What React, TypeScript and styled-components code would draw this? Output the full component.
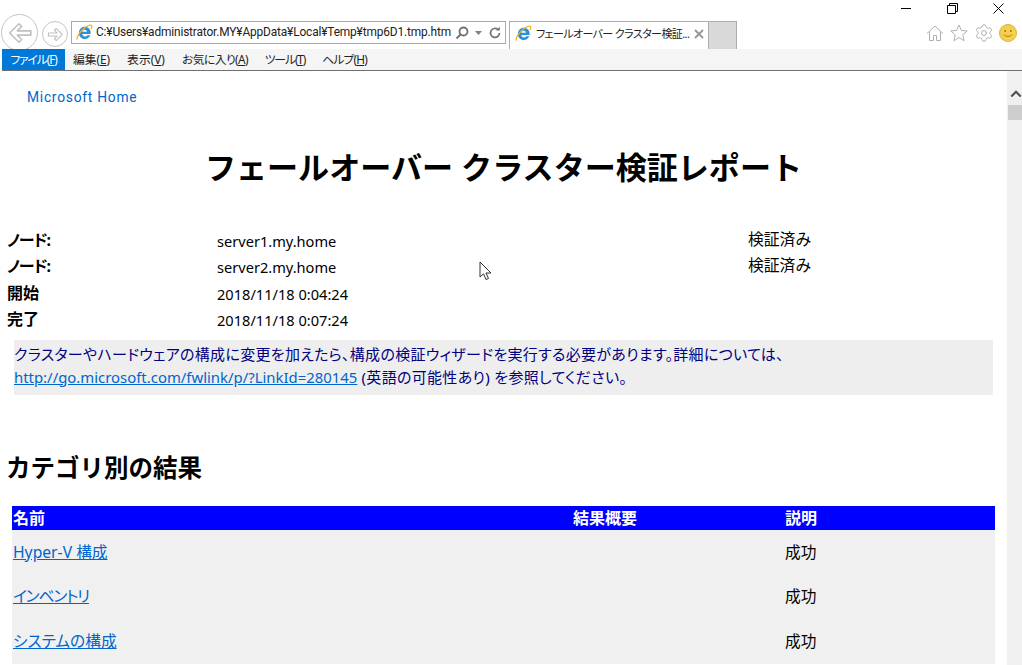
import React from "react";
import styled, { createGlobalStyle } from "styled-components";
import { Settings } from "lucide-react";

const SANS = `"Noto Sans", "Noto Sans CJK JP", sans-serif`;

const Global = createGlobalStyle`
  html, body { margin: 0; padding: 0; height: 100%; overflow: hidden; background: #fff; }
  #root { height: 100%; }
  * { box-sizing: border-box; }
`;

const Page = styled.div`
  width: 1022px; height: 665px; overflow: hidden; position: relative;
  display: flex; flex-direction: column; font-family: ${SANS}; color: #000; background: #fff;
`;
const Chrome = styled.header`flex: 0 0 71px; display: flex; flex-direction: column;`;
const TitleBar = styled.div`
  flex: 0 0 20px; display: flex; justify-content: flex-end; align-items: flex-start; padding: 0 18px 0 0; gap: 35px;
  & > svg { margin-top: 3px; }
`;
const NavRow = styled.div`flex: 0 0 29px; min-height: 0; display: flex; align-items: flex-start; padding: 1px 0 0 1px;`;
const BackButton = styled.div`
  flex: none; width: 37px; height: 37px; margin-top: -7px; border: 1px solid #c4c4c4; border-radius: 50%;
  display: flex; align-items: center; justify-content: center; background: #fff;
`;
const ForwardButton = styled.div`
  flex: none; width: 26px; height: 26px; margin-left: 4px; border: 1px solid #c4c4c4; border-radius: 50%;
  display: flex; align-items: center; justify-content: center;
`;
const AddressBar = styled.div`
  flex: none; width: 435px; height: 23px; margin-left: 3px; border: 1px solid #a9a9a9; display: flex; align-items: center; padding: 0 4px 0 4px; background: #fff;
`;
const PageIcon = styled.div`flex: none; width: 20px; display: flex; align-items: center;`;
const AddressText = styled.span`
  width: 356px; flex: none; font-family: Roboto, sans-serif; font-size: 11.9px; letter-spacing: -0.15px; white-space: nowrap; color: #222; line-height: 21px;
`;
const AddressTools = styled.div`display: flex; align-items: center; gap: 5px; margin-left: 3px;`;
const Tab = styled.div`
  flex: none; width: 200px; height: 28px; margin-left: 3px; border: 1px solid #adadad; border-bottom: none;
  background: #fff; display: flex; align-items: center; padding: 0 4px 4px 5px; position: relative; z-index: 1;
  & > svg { flex: none; }
`;
const TabTitle = styled.span`
  margin-left: 4px; font-size: 11px; letter-spacing: -0.6px; white-space: nowrap; color: #222; flex: 1; min-width: 0; line-height: 20px; font-feature-settings: "palt";
`;
const NewTab = styled.div`flex: none; width: 28px; height: 28px; background: #d9d9d9; border: 1px solid #adadad; border-left: none; border-bottom: none;`;
const Tools = styled.div`margin-left: auto; display: flex; align-items: center; gap: 4.3px; padding: 2px 4px 0 0;`;
const MenuBar = styled.nav`
  flex: 0 0 22px; margin-left: 2px; background: #f5f5f5; border-bottom: 1px solid #707070; display: flex; align-items: stretch;
  position: relative; z-index: 2; width: 1020px;
`;
const MenuItem = styled.span<{ $active?: boolean; $w: number; $tight?: number }>`
  flex: none; width: ${(p) => p.$w}px; font-size: 11.8px; line-height: 21px; text-align: center; white-space: nowrap; font-feature-settings: "palt";
  letter-spacing: ${(p) => p.$tight ?? 0}px;
  background: ${(p) => (p.$active ? "#0078d7" : "transparent")};
  color: ${(p) => (p.$active ? "#fff" : "#222")};
  & u { text-underline-offset: 1px; }
`;
const Body = styled.div`flex: 1; display: flex; min-height: 0;`;
const Content = styled.main`flex: 1; min-width: 0; padding: 0 0 0 7px; overflow: hidden;`;
const Home = styled.a`
  display: block; margin: 16px 0 0 20px; font-family: Roboto, sans-serif; font-size: 13.8px; line-height: 20px; letter-spacing: 0.75px; color: #0066cc; text-decoration: none;
`;
const Title = styled.h1`
  margin: 39px 0 0 -7px; text-align: center; font-size: 31.05px; font-weight: 700; line-height: 42px; white-space: nowrap;
`;
const InfoGrid = styled.div`
  margin-top: 39px; display: grid; grid-template-columns: 210px 531px auto; grid-auto-rows: 26.4px; width: 999px;
`;
const Label = styled.div<{ $tight?: boolean }>`
  font-weight: 700; font-size: 16px; line-height: 24px; padding-top: 1px; font-feature-settings: "palt";
  letter-spacing: ${(p) => (p.$tight ? "-1px" : "0")};
`;
const Value = styled.div`font-size: 14.6px; line-height: 26px; padding-top: 1px;`;
const Status = styled.div`font-size: 15.8px; line-height: 24px;`;
const Notice = styled.p`
  margin: 7px 0 0 7px; width: 979px; height: 55px; background: #eeeeee; color: #000080; font-size: 15px; line-height: 23px; letter-spacing: 0.3px; padding: 3px 0 0 0; white-space: nowrap; font-feature-settings: "palt";
`;
const NoticeLink = styled.a`color: #0066cc; text-decoration: underline; font-size: 14.9px; letter-spacing: 0;`;
const Heading = styled.h2`margin: 56px 0 0 -1px; font-size: 24.5px; font-weight: 700; line-height: 33px; white-space: nowrap;`;
const Table = styled.div`margin: 22px 0 0 5px; width: 983px;`;
const HeadRow = styled.div`
  display: grid; grid-template-columns: 560px 212px 1fr; height: 24px; background: #0000ff; color: #fff; font-size: 16px; font-weight: 700; line-height: 24px; padding-left: 1px;
`;
const Row = styled.div`
  display: grid; grid-template-columns: 560px 212px 1fr; height: 44.8px; background: #f0f0f0; font-size: 15.7px; line-height: 44px; padding-left: 1px; font-feature-settings: "palt";
`;
const RowLink = styled.a<{ $tight?: boolean }>`
  color: #0066cc; text-decoration: underline; letter-spacing: ${(p) => (p.$tight ? "-1.1px" : "0")};
`;
const Scrollbar = styled.aside`
  flex: 0 0 15px; background: #f0f0f0; display: flex; flex-direction: column; align-items: center; padding: 19px 0 0 1px;
  & > svg { margin-left: 2px; }
`;
const Thumb = styled.div`width: 14px; height: 15px; background: #cdcdcd; margin-top: 7px;`;
const CursorArrow = styled.svg`position: absolute; left: 479px; top: 261px;`;

const IeLogo = ({ size }: { size: number }) => (
  <svg width={size} height={size} viewBox="0 0 20 20">
    <path d="M17 11.800H7.400c.2 1.900 1.500 2.900 3.100 2.900 1.200 0 2.200-.6 2.800-1.500h3.500c-1 2.700-3.500 4.400-6.400 4.400-4 0-7-3.100-7-7.100 0-4.100 3-7.300 7-7.300 3.900 0 6.800 2.800 6.800 6.900 0 .6 0 1.100-.2 1.700zM7.400 9.200h5.500c-.1-1.600-1.200-2.500-2.700-2.500-1.500 0-2.600 1-2.800 2.500z" fill="#2f8fd6" />
    <path d="M1.500 18.500C.2 16.800 4 9.500 9 5.500c4-3 8-5 9.300-3.600.7.800.1 2.400-.9 4" fill="none" stroke="#f2b122" strokeWidth="1.500" />
  </svg>
);

const Arrow = ({ size, left }: { size: number; left?: boolean }) => (
  <svg width={size} height={size} viewBox="0 0 24 24" style={{ transform: left ? "none" : "scaleX(-1)" }}>
    <path d="M11 3.500 2.500 12l8.500 8.500 2.500-2.500-4-4h12.500v-4H9.500l4-4z" fill="#fff" stroke="#c0c0c0" strokeWidth="1.500" strokeLinejoin="round" />
  </svg>
);

export default function App() {
  return (
    <Page>
      <Global />
      <Chrome>
        <TitleBar>
          <svg width="11" height="11" viewBox="0 0 11 11"><path d="M0 5.500h10" stroke="#000" /></svg>
          <svg width="11" height="11" viewBox="0 0 11 11" fill="none" stroke="#000"><path d="M.5 2.500h8v8h-8zM2.500 2.500v-2h8v8h-2" /></svg>
          <svg width="11" height="11" viewBox="0 0 11 11" fill="none" stroke="#000"><path d="M.5.500l10 10M10.500.500l-10 10" /></svg>
        </TitleBar>
        <NavRow>
          <BackButton><Arrow size={26} left /></BackButton>
          <ForwardButton><Arrow size={17} /></ForwardButton>
          <AddressBar>
            <PageIcon><IeLogo size={17} /></PageIcon>
            <AddressText>C:¥Users¥administrator.MY¥AppData¥Local¥Temp¥tmp6D1.tmp.htm</AddressText>
            <AddressTools>
              <svg width="14" height="14" viewBox="0 0 14 14" fill="none" stroke="#707070" strokeWidth="1.800"><circle cx="8.500" cy="5.500" r="4" /><path d="M5.500 8.500 1.500 12.500" /></svg>
              <svg width="9" height="6" viewBox="0 0 9 6"><path d="M1 1h7L4.500 5z" fill="#808080" /></svg>
              <svg width="14" height="14" viewBox="0 0 14 14" fill="none" stroke="#707070" strokeWidth="1.700"><path d="M11.500 7a4.500 4.500 0 1 1-1.500-3.400" /><path d="M8 4.500h3.800V.8" fill="#707070" stroke="none" /></svg>
            </AddressTools>
          </AddressBar>
          <Tab>
            <IeLogo size={17} />
            <TabTitle>フェールオーバー クラスター検証...</TabTitle>
            <svg width="10" height="10" viewBox="0 0 10 10" stroke="#999" strokeWidth="2"><path d="M1 1l8 8M9 1l-8 8" /></svg>
          </Tab>
          <NewTab />
          <Tools>
            <svg width="20" height="20" viewBox="0 0 20 20" fill="#fff" stroke="#b0b0b0"><path d="M2 10.500 10 3l8 7.500M4.500 8.500v9h4v-5h3v5h4v-9" /></svg>
            <svg width="20" height="20" viewBox="0 0 20 20" fill="#fff" stroke="#b0b0b0"><path d="m10 2 2.400 5.400 5.800.6-4.400 3.900 1.300 5.800L10 14.700l-5.100 3 1.300-5.800L1.800 8l5.800-.6z" /></svg>
            <Settings size={20} strokeWidth={1.1} color="#a8a8a8" />
            <svg width="20" height="20" viewBox="0 0 20 20"><circle cx="10" cy="10" r="8.500" fill="#f6cf4e" stroke="#d9b23a" /><circle cx="7.200" cy="8" r="1" fill="#a17c12" /><circle cx="12.800" cy="8" r="1" fill="#a17c12" /><path d="M6 11.500c1 2.500 7 2.500 8 0" fill="none" stroke="#a17c12" /></svg>
          </Tools>
        </NavRow>
        <MenuBar>
          <MenuItem $active $w={63} $tight={-1.1}>ファイル(<u>F</u>)</MenuItem>
          <MenuItem $w={53}>編集(<u>E</u>)</MenuItem>
          <MenuItem $w={56}>表示(<u>V</u>)</MenuItem>
          <MenuItem $w={82} $tight={-0.6}>お気に入り(<u>A</u>)</MenuItem>
          <MenuItem $w={58} $tight={-1.1}>ツール(<u>T</u>)</MenuItem>
          <MenuItem $w={61} $tight={-0.8}>ヘルプ(<u>H</u>)</MenuItem>
        </MenuBar>
      </Chrome>
      <Body>
        <Content>
          <Home href="#">Microsoft Home</Home>
          <Title>フェールオーバー クラスター検証レポート</Title>
          <InfoGrid>
            <Label $tight>ノード:</Label><Value>server1.my.home</Value><Status>検証済み</Status>
            <Label $tight>ノード:</Label><Value>server2.my.home</Value><Status>検証済み</Status>
            <Label>開始</Label><Value>2018/11/18 0:04:24</Value><div />
            <Label>完了</Label><Value>2018/11/18 0:07:24</Value><div />
          </InfoGrid>
          <Notice>
            クラスターやハードウェアの構成に変更を加えたら、構成の検証ウィザードを実行する必要があります。詳細については、<br />
            <NoticeLink href="#">http://go.microsoft.com/fwlink/p/?LinkId=280145</NoticeLink> (英語の可能性あり) を参照してください。
          </Notice>
          <Heading>カテゴリ別の結果</Heading>
          <Table>
            <HeadRow><span>名前</span><span>結果概要</span><span>説明</span></HeadRow>
            <Row><span><RowLink href="#">Hyper-V 構成</RowLink></span><span /><span>成功</span></Row>
            <Row><span><RowLink href="#" $tight>インベントリ</RowLink></span><span /><span>成功</span></Row>
            <Row><span><RowLink href="#">システムの構成</RowLink></span><span /><span>成功</span></Row>
          </Table>
        </Content>
        <Scrollbar>
          <svg width="12" height="8" viewBox="0 0 14 9" fill="none" stroke="#505050" strokeWidth="2.500"><path d="M1.500 7.500 7 2l5.500 5.500" /></svg>
          <Thumb />
        </Scrollbar>
      </Body>
      <CursorArrow width="14" height="20" viewBox="0 0 14 20">
        <path d="M1 1v15l3.500-3.200L7 18.500l2.500-1-2.500-5.500h5z" fill="#fff" stroke="#333" strokeWidth="1" />
      </CursorArrow>
    </Page>
  );
}
